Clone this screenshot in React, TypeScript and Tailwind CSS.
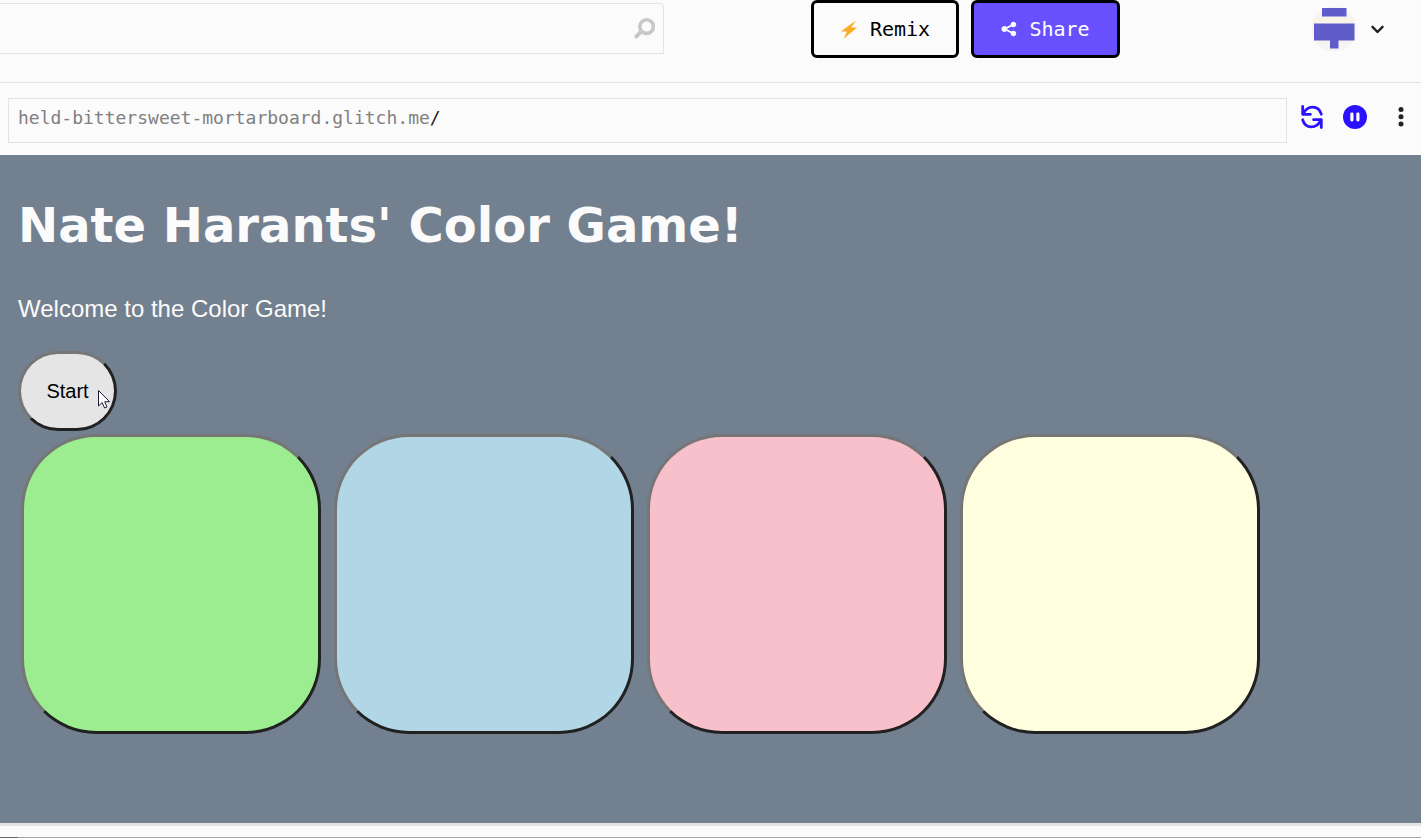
import React from "react";

const bevel =
  "border-[3px] border-t-[#767676] border-l-[#767676] border-b-[#212121] border-r-[#212121]";

const tiles = [
  { name: "Green", fill: "bg-[#9bed8f]" },
  { name: "Blue", fill: "bg-[#b1d7e6]" },
  { name: "Pink", fill: "bg-[#f8c0ca]" },
  { name: "Yellow", fill: "bg-[#ffffdf]" },
];

function SearchIcon() {
  return (
    <svg width="22" height="22" viewBox="0 0 22 22" fill="none" stroke="#c7c7c7" aria-hidden="true">
      <circle cx="13.6" cy="8.6" r="6.8" strokeWidth="3.6" />
      <path d="M8.4 13.4 L3.4 18.4" strokeWidth="4" strokeLinecap="round" />
    </svg>
  );
}

function BoltIcon() {
  return (
    <svg width="18" height="19" viewBox="0 0 18 19" fill="#fbab26" aria-hidden="true">
      <path d="M15.8 0.5 L0.8 11.4 L7 11.4 L3.6 18.8 L17.2 7.4 L11.2 7.4 Z" />
    </svg>
  );
}

function ShareIcon() {
  return (
    <svg width="16" height="16" viewBox="0 0 16 16" fill="#fff" stroke="#fff" aria-hidden="true">
      <path d="M12.5 3.5 L3.5 8 L12.5 12.5" fill="none" strokeWidth="1.8" />
      <circle cx="12.4" cy="3.5" r="2.3" />
      <circle cx="3.4" cy="8" r="2.5" />
      <circle cx="12.4" cy="12.5" r="2.3" />
    </svg>
  );
}

function Avatar() {
  return (
    <svg width="46" height="46" viewBox="0 0 46 46" aria-hidden="true">
      <circle cx="23" cy="23" r="22.5" fill="#f5f4f3" />
      <path d="M2 12 H44 V16 H1 Z" fill="#f9f5e6" />
      <path d="M11 2 H35.5 V10.5 H11 Z M3 17.5 H43.5 V34.5 H27.5 V42.5 H19 V34.5 H3 Z" fill="#605cc9" />
    </svg>
  );
}

function RefreshIcon() {
  return (
    <svg width="24" height="24" viewBox="0 0 24 24" fill="none" stroke="#2a12ff" strokeWidth="2.8" strokeLinecap="round" strokeLinejoin="round" aria-hidden="true">
      <path d="M2.7 1.5 V9.3 H10.4" />
      <path d="M3.4 8.8 C7 0 18.5 -0.4 21.3 9.2" />
      <path d="M21.3 22.5 V14.7 H13.6" />
      <path d="M20.6 15.2 C17 24 5.5 24.4 2.7 14.8" />
    </svg>
  );
}

function PauseIcon() {
  return (
    <svg width="24" height="24" viewBox="0 0 24 24" aria-hidden="true">
      <circle cx="12" cy="12" r="12" fill="#2a12ff" />
      <rect x="7.3" y="7.6" width="3.2" height="8.8" rx="1.4" fill="#fff" />
      <rect x="13.3" y="7.6" width="3.2" height="8.8" rx="1.4" fill="#fff" />
    </svg>
  );
}

function Cursor() {
  return (
    <svg className="pointer-events-none absolute top-[39px] left-20" width="13" height="20" viewBox="0 0 13 20" aria-hidden="true">
      <path d="M0.5 0.5 V16 L4.2 12.6 L6.6 18 L9 17 L6.7 11.7 H11.6 Z" fill="#fff" stroke="#1c1c3a" strokeWidth="1" />
    </svg>
  );
}

export default function App() {
  return (
    <div className="flex min-h-screen flex-col bg-[#fbfbfb] font-['Liberation_Sans',Arial,sans-serif] text-[#222]">
      <header className="flex h-[83px] items-start border-b border-[#e3e3e3]">
        <form className="mt-[3px] flex h-[51px] w-[664px] items-center rounded-tr border-y border-r border-[#e3e3e3] pr-2" role="search">
          <input type="search" aria-label="Search" className="h-full min-w-0 flex-1 bg-transparent px-3 text-lg outline-none" />
          <button type="submit" aria-label="Submit search">
            <SearchIcon />
          </button>
        </form>
        <div className="ml-[147px] flex gap-3 font-['DejaVu_Sans_Mono',monospace] text-xl leading-6">
          <button className="flex h-[58px] w-[148px] items-center justify-center gap-3 rounded-md border-[3px] border-black text-black">
            <BoltIcon />
            Remix
          </button>
          <button className="flex h-[58px] w-[149px] items-center justify-center gap-3 rounded-md border-[3px] border-black bg-[#6850ff] text-white">
            <ShareIcon />
            Share
          </button>
        </div>
        <button aria-label="Account menu" className="mt-1.5 mr-[37px] ml-auto flex items-center gap-3.5">
          <Avatar />
          <svg width="13" height="9" viewBox="0 0 13 9" fill="none" stroke="#222" strokeWidth="2.4" strokeLinecap="round" strokeLinejoin="round" aria-hidden="true">
            <path d="M1.5 1.8 L6.5 7 L11.5 1.8" />
          </svg>
        </button>
      </header>

      <nav aria-label="Preview controls" className="flex h-[72px] items-center pr-[17px] pb-1 pl-2">
        <div className="mt-1.5 flex h-[45px] min-w-0 flex-1 items-center border border-[#e3e3e3] px-[9px] pb-1 font-['DejaVu_Sans_Mono',monospace] text-lg">
          <a href="#preview" className="text-[#808080]">
            held-bittersweet-mortarboard.glitch.me<span className="text-[#222]">/</span>
          </a>
        </div>
        <button aria-label="Refresh" className="ml-[13px]">
          <RefreshIcon />
        </button>
        <button aria-label="Pause" className="ml-[19px]">
          <PauseIcon />
        </button>
        <button aria-label="More options" className="ml-[31px]">
          <svg width="6" height="20" viewBox="0 0 6 20" fill="#222" aria-hidden="true">
            <circle cx="3" cy="2.6" r="2.5" />
            <circle cx="3" cy="9.8" r="2.5" />
            <circle cx="3" cy="17" r="2.5" />
          </svg>
        </button>
      </nav>

      <main id="preview" className="flex-1 bg-[#73808f] px-[18px] pt-10 pb-20 text-[#fbfbfb]">
        <h1 className="font-['DejaVu_Sans',Verdana,sans-serif] text-5xl leading-[60px] font-bold">Nate Harants' Color Game!</h1>
        <p className="mt-10 text-2xl leading-7">Welcome to the Color Game!</p>
        <div className="relative mt-7 w-fit">
          <button className={`block h-20 w-[99px] rounded-[40px] bg-[#e5e5e5] text-xl text-black ${bevel}`}>Start</button>
          <Cursor />
        </div>
        <div className="mt-[3px] ml-[3px] flex flex-wrap gap-[13px]">
          {tiles.map((tile) => (
            <button key={tile.name} aria-label={tile.name} className={`size-[300px] rounded-[75px] ${tile.fill} ${bevel}`} />
          ))}
        </div>
      </main>

      <footer className="flex h-[15px] flex-col border-t-[3px] border-[#e5e4e7]">
        <div className="mt-auto flex h-px bg-[#a3a3a3]">
          <div className="w-[18px] bg-[#686868]" />
        </div>
      </footer>
    </div>
  );
}
